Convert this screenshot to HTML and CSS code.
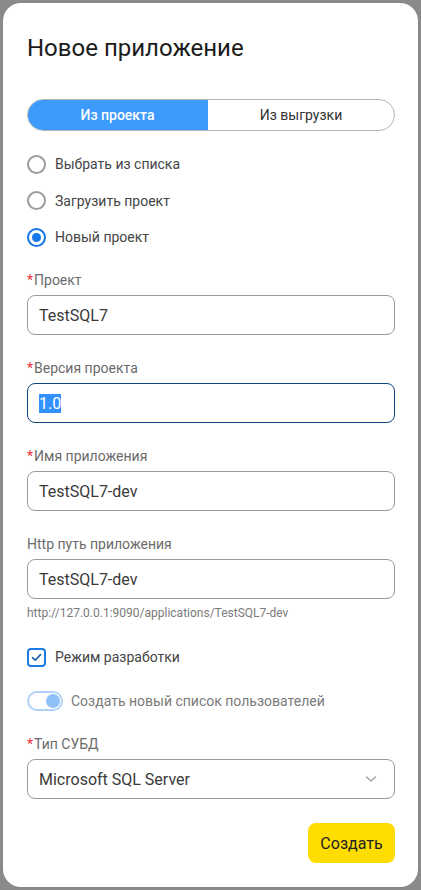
FILE: index.html
```html
<!DOCTYPE html>
<html lang="ru">
<head>
<meta charset="utf-8">
<title>Новое приложение</title>
<link rel="stylesheet" href="styles.css">
</head>
<body>
<div class="modal">
  <h1 class="title">Новое приложение</h1>

  <div class="segmented">
    <div class="seg seg-active">Из проекта</div>
    <div class="seg">Из выгрузки</div>
  </div>

  <div class="radios">
    <div class="radio-row"><span class="radio"></span><span>Выбрать из списка</span></div>
    <div class="radio-row"><span class="radio"></span><span>Загрузить проект</span></div>
    <div class="radio-row"><span class="radio radio-on"></span><span>Новый проект</span></div>
  </div>

  <div class="field">
    <div class="label"><span class="req">*</span>Проект</div>
    <div class="input">TestSQL7</div>
  </div>

  <div class="field">
    <div class="label"><span class="req">*</span>Версия проекта</div>
    <div class="input input-focus"><span class="sel">1.0</span></div>
  </div>

  <div class="field">
    <div class="label"><span class="req">*</span>Имя приложения</div>
    <div class="input">TestSQL7-dev</div>
  </div>

  <div class="field field-hint">
    <div class="label">Http путь приложения</div>
    <div class="input">TestSQL7-dev</div>
    <div class="hint">http://127.0.0.1:9090/applications/TestSQL7-dev</div>
  </div>

  <div class="check-row">
    <span class="checkbox">
      <svg width="11" height="9" viewBox="0 0 11 9"><path d="M1.5 4.6 L4.2 7.2 L9.5 1.6" fill="none" stroke="#1a5fb0" stroke-width="1.6" stroke-linecap="round" stroke-linejoin="round"/></svg>
    </span>
    <span>Режим разработки</span>
  </div>

  <div class="toggle-row">
    <span class="toggle"><span class="knob"></span></span>
    <span>Создать новый список пользователей</span>
  </div>

  <div class="field">
    <div class="label"><span class="req">*</span>Тип СУБД</div>
    <div class="input select">
      <span>Microsoft SQL Server</span>
      <svg class="chev" width="12" height="8" viewBox="0 0 12 8"><path d="M1.5 2 L6 6 L10.5 2" fill="none" stroke="#9a9a9a" stroke-width="1.2" stroke-linecap="round" stroke-linejoin="round"/></svg>
    </div>
  </div>

  <div class="actions">
    <button class="btn-primary">Создать</button>
  </div>
</div>
</body>
</html>
```

FILE: styles.css
```css
* { box-sizing: border-box; }
html, body { margin: 0; padding: 0; }
body {
  background: #8a8a8a;
  width: 421px;
  height: 890px;
  padding: 3px 3px 3px 3px;
  font-family: Roboto, "Noto Sans", "Liberation Sans", sans-serif;
  overflow: hidden;
}
.modal {
  background: #fff;
  width: 415px;
  height: 884px;
  border-radius: 18px;
  padding: 30px 23px 0 24px;
  display: flex;
  flex-direction: column;
}
.title {
  margin: 0;
  font-size: 24px;
  line-height: 30px;
  font-weight: 400;
  color: #1b1b1b;
}
.segmented {
  margin-top: 36px;
  height: 32px;
  display: flex;
  border: 1px solid #b4b4b4;
  border-radius: 16px;
  overflow: hidden;
}
.seg {
  flex: 0 0 180px;
  display: flex;
  align-items: center;
  justify-content: center;
  font-size: 14px;
  color: #333;
}
.seg + .seg { flex: 1 1 auto; }
.seg-active {
  background: #3d9bfb;
  color: #fff;
  font-weight: 500;
  margin: -1px 0 -1px -1px;
  flex-basis: 181px;
}
.radios {
  margin-top: 22px;
  display: flex;
  flex-direction: column;
  gap: 14.5px;
}
.radio-row, .check-row, .toggle-row {
  display: flex;
  align-items: center;
  height: 22px;
  font-size: 14px;
  color: #454545;
}
.radio {
  width: 19px;
  height: 19px;
  border: 2px solid #9c9c9c;
  border-radius: 50%;
  margin-right: 9px;
  display: flex;
  align-items: center;
  justify-content: center;
}
.radio-on { border-color: #1677e8; }
.radio-on::after {
  content: "";
  width: 9px;
  height: 9px;
  border-radius: 50%;
  background: #1677e8;
}
.field { margin-top: 22px; }
.field + .field { margin-top: 23px; }
.label {
  font-size: 14px;
  line-height: 20px;
  color: #6b6b6b;
  margin-bottom: 5px;
}
.req { color: #f0343c; margin-right: 1px; }
.input {
  height: 40px;
  border: 1px solid #9a9a9a;
  border-radius: 8px;
  padding: 0 11px;
  display: flex;
  align-items: center;
  font-size: 16px;
  color: #3a3a3a;
}
.input-focus { border-color: #10457f; }
.sel { background: #3390ff; color: #fff; }
.hint {
  margin-top: 6px;
  font-size: 12px;
  line-height: 16px;
  color: #7a7a7a;
}
.check-row { margin-top: 25px; }
.checkbox {
  width: 19px;
  height: 19px;
  border: 2px solid #1c7ce6;
  border-radius: 4px;
  margin-right: 9px;
  display: flex;
  align-items: center;
  justify-content: center;
}
.toggle-row { margin-top: 22px; color: #7a7a7a; }
.toggle {
  width: 36px;
  height: 20px;
  border: 2px solid #b0d2f8;
  border-radius: 10px;
  margin-right: 8px;
  display: flex;
  align-items: center;
  justify-content: flex-end;
  padding-right: 1px;
}
.knob {
  width: 14px;
  height: 14px;
  border-radius: 50%;
  background: #8fc1f8;
}
.toggle-row + .field { margin-top: 22px; }
.select { justify-content: space-between; padding-right: 17px; }
.actions {
  margin-top: 24px;
  display: flex;
  justify-content: flex-end;
}
.btn-primary {
  height: 40px;
  width: 87px;
  background: #ffdd00;
  border: none;
  border-radius: 8px;
  font-family: inherit;
  font-size: 16px;
  color: #222;
  padding: 0;
}
```
